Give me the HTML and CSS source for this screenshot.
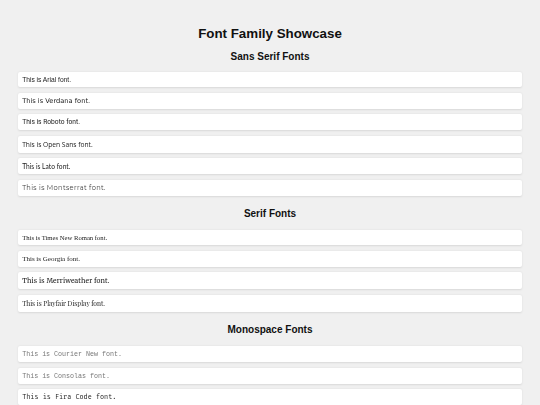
FILE: index.html
```html
<!DOCTYPE html>
<html lang="en">
<head>
    <meta charset="UTF-8">
    <meta name="viewport" content="width=device-width, initial-scale=1.0">
    <title>Font Family Showcase</title>
    <link rel="stylesheet" href="styles.css">
</head>
<body>
    <h1>Font Family Showcase</h1>

    <section class="font-group">
        <h2>Sans Serif Fonts</h2>
        <div class="font-list">
            <p class="font-card arial">This is Arial font.</p>
            <p class="font-card verdana">This is Verdana font.</p>
            <p class="font-card roboto">This is Roboto font.</p>
            <p class="font-card open-sans">This is Open Sans font.</p>
            <p class="font-card lato">This is Lato font.</p>
            <p class="font-card montserrat">This is Montserrat font.</p>
        </div>
    </section>

    <section class="font-group">
        <h2>Serif Fonts</h2>
        <div class="font-list">
            <p class="font-card times">This is Times New Roman font.</p>
            <p class="font-card georgia">This is Georgia font.</p>
            <p class="font-card merriweather">This is Merriweather font.</p>
            <p class="font-card playfair">This is Playfair Display font.</p>
        </div>
    </section>

    <section class="font-group">
        <h2>Monospace Fonts</h2>
        <div class="font-list">
            <p class="font-card courier">This is Courier New font.</p>
            <p class="font-card consolas">This is Consolas font.</p>
            <p class="font-card fira">This is Fira Code font.</p>
        </div>
    </section>
</body>
</html>
```

FILE: styles.css
```css
* {
    margin: 0;
    padding: 0;
    box-sizing: border-box;
}

body {
    font-family: 'Liberation Sans', Arial, sans-serif;
    background-color: #f0f0f0;
    color: #222;
    padding: 26px 18px 0;
}

h1 {
    font-size: 13.33px;
    text-align: center;
    color: #111;
    margin-bottom: 9.5px;
}

h2 {
    font-size: 10px;
    text-align: center;
    color: #111;
    margin-bottom: 10.5px;
}

.font-group + .font-group {
    margin-top: 12.5px;
}

.font-list {
    display: flex;
    flex-direction: column;
    gap: 5.2px;
    /* own layer keeps the small text greyscale */
    will-change: transform;
}

.font-card {
    background-color: #fff;
    padding: 4.17px;
    font-size: 6.67px;
    border-radius: 2px;
    box-shadow: 0 0.5px 2px rgba(0, 0, 0, 0.1);
}

/* Sans serif */
.arial { font-family: 'Liberation Sans', Arial, sans-serif; }
.verdana { font-family: Verdana, 'DejaVu Sans', sans-serif; }
.roboto { font-family: Roboto, sans-serif; }
.open-sans { font-family: 'Open Sans', sans-serif; }
.lato { font-family: Lato, sans-serif; }
.montserrat { font-family: Montserrat, 'DejaVu Sans', sans-serif; letter-spacing: 0.35px; color: #444; }

/* Serif */
.times { font-family: 'Liberation Serif', 'Times New Roman', serif; }
.georgia { font-family: Georgia, 'Liberation Serif', serif; font-size: 7px; }
.merriweather { font-family: Merriweather, 'DejaVu Serif', serif; letter-spacing: 0.15px; }
.playfair { font-family: 'Playfair Display', 'Liberation Serif', serif; }

/* Monospace */
.courier { font-family: 'Liberation Mono', 'Courier New', monospace; color: #777; }
.consolas { font-family: Consolas, 'Liberation Mono', monospace; color: #777; }
.fira { font-family: 'Fira Code', 'DejaVu Sans Mono', monospace; }
```
